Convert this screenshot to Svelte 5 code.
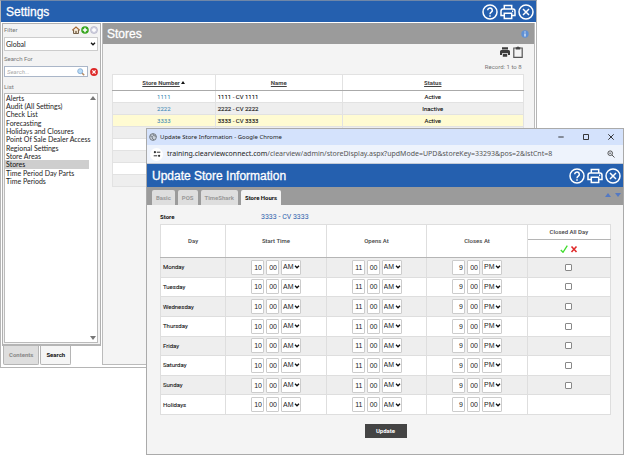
<script>
  let filter = "Global";
  let search = "";
  let selected = "Stores";

  const settings = [
    "Alerts",
    "Audit (All Settings)",
    "Check List",
    "Forecasting",
    "Holidays and Closures",
    "Point Of Sale Dealer Access",
    "Regional Settings",
    "Store Areas",
    "Stores",
    "Time Period Day Parts",
    "Time Periods"
  ];

  const stores = [
    { number: "1111", name: "1111 - CV 1111", status: "Active" },
    { number: "2222", name: "2222 - CV 2222", status: "Inactive" },
    { number: "3333", name: "3333 - CV 3333", status: "Active", current: true },
    {}, {}, {}, {}, {}
  ];

  const tabs = ["Basic", "POS", "TimeShark", "Store Hours"];
  let activeTab = "Store Hours";

  const dayNames = ["Monday", "Tuesday", "Wednesday", "Thursday", "Friday", "Saturday", "Sunday", "Holidays"];

  let days = dayNames.map((name) => ({
    name,
    closed: false,
    times: [
      { label: "Start Time", hour: "10", minute: "00", half: "AM" },
      { label: "Opens At", hour: "11", minute: "00", half: "AM" },
      { label: "Closes At", hour: "9", minute: "00", half: "PM" }
    ]
  }));

  function setAll(closed) {
    days = days.map((day) => ({ ...day, closed }));
  }
</script>

{#snippet chevron()}
  <svg class="chevron" viewBox="0 0 6 4" aria-hidden="true"><path d="M1 .8 3 2.8 5 .8" fill="none" stroke="#111" stroke-width="1.3" /></svg>
{/snippet}

{#snippet windowButtons()}
  <div class="window-buttons">
    <button aria-label="Help">
      <svg viewBox="0 0 16 16"><circle cx="8" cy="8" r="7" /><path d="M5.7 6.3a2.3 2.3 0 1 1 3.6 1.9C8.4 8.8 8 9.2 8 10.2M8 11.3v1.5" /></svg>
    </button>
    <button aria-label="Print">
      <svg viewBox="0 0 16 16"><path d="M4.3 5V1.5h7.4V5M4.3 11.5H1V7.3Q1 5 3 5h10q2 0 2 2.300v4.200h-3.300M4.300 9.300h7.400v5.200H4.300z" /><path d="M12 7.300h1.200" /></svg>
    </button>
    <button aria-label="Close">
      <svg viewBox="0 0 16 16"><circle cx="8" cy="8" r="7" /><path d="m5 5 6 6M11 5l-6 6" /></svg>
    </button>
  </div>
{/snippet}

<main>
  <section class="settings-window">
    <header class="blue-bar">
      <h1>Settings</h1>
      {@render windowButtons()}
    </header>

    <div class="columns">
      <aside>
        <div class="side-panel">
          <div class="label-row">
            <label for="filter">Filter</label>
            <div class="mini-icons">
              <button aria-label="Home">
                <svg viewBox="0 0 8 8"><path d="M1.500 4v3.500h5V4" fill="#eee2cc" stroke="#77634b" /><path d="M.3 4.300 4 1l3.700 3.300" fill="none" stroke="#a56832" stroke-width="1.200" /><path d="M3.300 5h1.400v2.500H3.300z" fill="#7b6650" /></svg>
              </button>
              <button aria-label="Add">
                <svg viewBox="0 0 8 8"><circle cx="4" cy="4" r="3.800" fill="#37a51e" /><path d="M4 1.800v4.400M1.800 4h4.400" stroke="#fff" stroke-width="1.500" /></svg>
              </button>
              <button aria-label="Edit">
                <svg viewBox="0 0 8 8"><circle cx="4" cy="4" r="3.500" fill="#d4d4e2" stroke="#aaaac0" stroke-width=".6" /><path d="M4 2v4M2 4h4" stroke="#fff" stroke-width="1.400" /></svg>
              </button>
            </div>
          </div>
          <div class="filter-select">
            <select id="filter" bind:value={filter}>
              <option>Global</option>
            </select>
            {@render chevron()}
          </div>

          <label class="search-label" for="search">Search For</label>
          <div class="search-row">
            <div class="search-box">
              <input id="search" type="text" placeholder="Search..." bind:value={search}>
              <svg viewBox="0 0 8 8" aria-hidden="true"><path d="m4.700 4.700 2.500 2.500" stroke="#b48a62" stroke-width="1.500" /><circle cx="3.200" cy="3.200" r="2.500" fill="#b9dcf7" stroke="#7fa6cf" stroke-width=".8" /></svg>
            </div>
            <button aria-label="Clear search" on:click={() => (search = "")}>
              <svg viewBox="0 0 8 8"><circle cx="4" cy="4" r="3.900" fill="#dd2929" /><path d="m2.400 2.400 3.200 3.200M5.600 2.400 2.400 5.600" stroke="#fff" stroke-width="1.300" /></svg>
            </button>
          </div>

          <label class="list-label" for="list">List</label>
          <div class="list-box">
            <select id="list" size="11" bind:value={selected}>
              {#each settings as item}
                <option>{item}</option>
              {/each}
            </select>
            <span class="arrow up"></span>
            <span class="arrow down"></span>
          </div>
        </div>
        <div class="side-tabs">
          <button>Contents</button>
          <button class="active">Search</button>
        </div>
      </aside>

      <div class="stores">
        <div class="stores-title">
          <h2>Stores</h2>
          <button aria-label="Info">
            <svg viewBox="0 0 8 8"><circle cx="4" cy="4" r="3.700" fill="#5f90d4" /><path d="M4 1.600v1M4 3.400v3" stroke="#fff" stroke-width="1.100" /></svg>
          </button>
        </div>
        <div class="tools">
          <button aria-label="Print list">
            <svg viewBox="0 0 12 12"><path d="M3 1.300h6v2.200H3zM2.500 4h7Q11 4 11 5.600V9H9V7.300H3V9H1V5.600Q1 4 2.500 4zM3.800 8h4.400v2.700H3.800z" fill="#3d3d3d" /></svg>
          </button>
          <button aria-label="Copy list">
            <svg viewBox="0 0 12 12"><path d="M1.800 2h8.400v9.300H1.800z" fill="none" stroke="#555" stroke-width="1.200" /><path d="M3.700 1.200h1.200a1.200 1.200 0 0 1 2.200 0h1.200v2.400H3.700z" fill="#444" /></svg>
          </button>
        </div>
        <p class="record">Record: 1 to 8</p>
        <table class="store-table">
          <thead>
            <tr>
              <th class="number"><a href="#number">Store Number</a> <span class="sort"></span></th>
              <th class="name"><a href="#name">Name</a></th>
              <th><a href="#status">Status</a></th>
            </tr>
          </thead>
          <tbody>
            {#each stores as store}
              <tr class:current={store.current}>
                <td>{#if store.number}<a href="#{store.number}">{store.number}</a>{/if}</td>
                <td class="name">{store.name ?? ""}</td>
                <td>{store.status ?? ""}</td>
              </tr>
            {/each}
          </tbody>
        </table>
      </div>
    </div>
  </section>

  <section class="popup">
    <div class="chrome-title">
      <svg class="globe" viewBox="0 0 8 8" aria-hidden="true"><circle cx="4" cy="4" r="3.400" fill="#c9d0da" stroke="#6c747e" stroke-width=".9" /><path d="M1 2.800 3.500 3.500 3 5l2 2M4 .8l.5 1.700 2.800.8" fill="none" stroke="#6c747e" stroke-width=".9" /></svg>
      <span>Update Store Information - Google Chrome</span>
      <div class="chrome-buttons">
        <button aria-label="Minimize"><svg viewBox="0 0 8 8"><path d="M1.300 4h5.400" /></svg></button>
        <button aria-label="Maximize"><svg viewBox="0 0 8 8"><path d="M1.500 1.500h5v5h-5z" /></svg></button>
        <button aria-label="Close window"><svg viewBox="0 0 8 8"><path d="m1.300 1.300 5.400 5.400M6.700 1.300 1.300 6.700" /></svg></button>
      </div>
    </div>
    <div class="address">
      <span class="site-info">
        <svg viewBox="0 0 8 8" aria-hidden="true"><path d="M3.800 2.200h3.500M.7 5.800h3.500" stroke="#333" /><circle cx="1.900" cy="2.200" r="1.100" fill="#333" /><circle cx="6.100" cy="5.800" r="1.100" fill="#333" /></svg>
      </span>
      <span class="url">training.clearviewconnect.com<i>/clearview/admin/storeDisplay.aspx?updMode=UPD&amp;storeKey=33293&amp;pos=2&amp;lstCnt=8</i></span>
      <button aria-label="Zoom">
        <svg viewBox="0 0 8 8"><circle cx="3.200" cy="3.200" r="2.300" fill="none" stroke="#444" stroke-width=".9" /><path d="m5 5 2.500 2.500M2.200 3.200h2" stroke="#444" stroke-width=".9" /></svg>
      </button>
    </div>
    <header class="blue-bar">
      <h1>Update Store Information</h1>
      {@render windowButtons()}
    </header>
    <nav>
      {#each tabs as tab}
        <button class:active={tab === activeTab} on:click={() => (activeTab = tab)}>{tab}</button>
      {/each}
      <div class="pager">
        <button aria-label="Previous store"><svg viewBox="0 0 6 4"><path d="M0 4 3 0l3 4z" fill="#5379c4" /></svg></button>
        <button aria-label="Next store"><svg viewBox="0 0 6 4"><path d="M0 0h6L3 4z" fill="#5379c4" /></svg></button>
      </div>
    </nav>

    <div class="hours">
      <div class="store-line">
        <strong>Store</strong>
        <span>3333 - CV 3333</span>
      </div>
      <table class="hours-table">
        <thead>
          <tr>
            <th class="day" rowspan="2">Day</th>
            <th rowspan="2">Start Time</th>
            <th rowspan="2">Opens At</th>
            <th rowspan="2">Closes At</th>
            <th class="closed">Closed All Day</th>
          </tr>
          <tr>
            <th class="toggles">
              <button aria-label="Check all" on:click={() => setAll(true)}>
                <svg viewBox="0 0 8 8"><path d="M.8 5 3 7.300 7.300.7" fill="none" stroke="#3fdc2d" stroke-width="1.300" /></svg>
              </button>
              <button aria-label="Clear all" on:click={() => setAll(false)}>
                <svg viewBox="0 0 8 8"><path d="M1.500 1.500 6.500 7M6.500 1.500 1.500 7" fill="none" stroke="#e02b2b" stroke-width="1.600" /></svg>
              </button>
            </th>
          </tr>
        </thead>
        <tbody>
          {#each days as day}
            <tr>
              <td class="day">{day.name}</td>
              {#each day.times as time}
                <td>
                  <div class="time-group">
                    <input type="text" aria-label="{day.name} {time.label} hour" bind:value={time.hour}>
                    <input type="text" aria-label="{day.name} {time.label} minute" bind:value={time.minute}>
                    <div class="half">
                      <select aria-label="{day.name} {time.label} half" bind:value={time.half}>
                        <option>AM</option>
                        <option>PM</option>
                      </select>
                      {@render chevron()}
                    </div>
                  </div>
                </td>
              {/each}
              <td>
                {#if day.name !== "Holidays"}
                  <input type="checkbox" aria-label="{day.name} closed all day" bind:checked={day.closed}>
                {/if}
              </td>
            </tr>
          {/each}
        </tbody>
      </table>
      <button class="update">Update</button>
    </div>
  </section>
</main>

<style>
  :global(body) {
    background: #fff;
  }

  main {
    position: relative;
    min-height: 100vh;
    font-family: Roboto, "Liberation Sans", sans-serif;
    font-size: 6px;
    line-height: 8px;
    color: #222;
  }

  main, main * {
    box-sizing: border-box;
  }

  h1, h2, p {
    margin: 0;
  }

  button, input, select {
    margin: 0;
    padding: 0;
    font: inherit;
    color: inherit;
    border: none;
    border-radius: 0;
    background: none;
    appearance: none;
  }

  svg {
    display: block;
  }

  table {
    width: 100%;
    border-collapse: collapse;
    table-layout: fixed;
  }

  /* settings window */
  .settings-window {
    width: 86%;
    border: 1px solid #b5b5b5;
    border-top-color: #6f87a8;
    background: #fff;
  }

  .blue-bar {
    display: flex;
    align-items: center;
    justify-content: space-between;
    height: 21px;
    padding: 0 2px 0 5px;
    background: #2560af;
  }

  h1, h2 {
    font-family: "Liberation Sans", Arial, sans-serif;
    font-size: 12px;
    font-weight: 400;
    line-height: 16px;
    color: #fff;
    -webkit-text-stroke: 0.3px #fff;
  }

  .window-buttons {
    display: flex;
    gap: 2px;
  }

  .window-buttons svg {
    width: 16px;
    height: 16px;
    fill: none;
    stroke: #fff;
    stroke-width: 1.5;
  }

  .columns {
    display: flex;
    gap: 1px;
    padding: 1px 1px 2px;
  }

  aside {
    flex: none;
    width: 99px;
  }

  .side-panel {
    padding: 2px 2px 1px 1px;
    border: 1px solid #b0b0b0;
    border-bottom: 2px solid #b5b5b5;
    background: #f3f3f3;
  }

  .side-panel label {
    color: #777;
  }

  .label-row, .mini-icons, .search-row, .search-box {
    display: flex;
    align-items: center;
  }

  .label-row {
    justify-content: space-between;
    height: 8px;
  }

  .mini-icons {
    gap: 1px;
  }

  .mini-icons svg, .search-row svg {
    width: 8px;
    height: 8px;
  }

  .filter-select {
    position: relative;
    margin: 3px 0 4px;
  }

  .filter-select select, .list-box select {
    font-family: Lato, "Liberation Sans", sans-serif;
    font-size: 7px;
  }

  .filter-select select {
    display: block;
    width: 100%;
    height: 14px;
    padding-left: 1px;
    border: 1px solid #ccc;
    background: #fff;
  }

  .chevron {
    position: absolute;
    top: 50%;
    right: 2px;
    width: 6px;
    height: 4px;
    margin-top: -2px;
    pointer-events: none;
  }

  .search-label, .list-label {
    display: block;
  }

  .search-row {
    gap: 2px;
    margin: 3px 0 6px;
  }

  .search-box {
    flex: 1;
    min-width: 0;
    height: 11px;
    padding-right: 2px;
    border: 1px solid #aab6c8;
    background: #fff;
  }

  .search-box svg {
    flex: none;
  }

  .search-box input {
    flex: 1;
    min-width: 0;
    height: 9px;
    padding-left: 2px;
    outline: none;
  }

  .search-box input::placeholder {
    font-style: italic;
    color: #aaa;
  }

  .list-box {
    position: relative;
    margin-top: 2px;
  }

  .list-box select {
    display: block;
    width: 100%;
    height: 250px;
    border: 1px solid #bbb;
    background: #fff;
    overflow: hidden;
  }

  .list-box option {
    min-height: 8px;
    margin-right: 8px;
    padding: 0 0 0 1px;
    line-height: 8px;
  }

  .list-box option:nth-child(3n) {
    padding-bottom: 1px;
  }

  .arrow {
    position: absolute;
    right: 2px;
    border: 3px solid transparent;
  }

  .up {
    top: 3px;
    border-top: none;
    border-bottom: 4px solid #777;
  }

  .down {
    bottom: 3px;
    border-bottom: none;
    border-top: 4px solid #777;
  }

  .side-tabs {
    display: flex;
    gap: 1px;
    padding-left: 1px;
  }

  .side-tabs button {
    height: 19px;
    padding: 0 5px;
    border: 1px solid #b5b5b5;
    border-top: none;
    border-radius: 0 0 2px 2px;
    background: #dedede;
    font-weight: 700;
    color: #888;
  }

  .side-tabs .active {
    background: #f5f5f5;
    color: #111;
  }

  .stores {
    flex: 1;
    min-width: 0;
    border: 1px solid #bbb;
    border-top: none;
    background: #f4f4f4;
  }

  .stores-title {
    display: flex;
    align-items: center;
    justify-content: space-between;
    height: 21px;
    padding: 0 5px 0 4px;
    background: #9b9b9b;
  }

  .stores-title svg {
    width: 8px;
    height: 8px;
  }

  .tools {
    display: flex;
    justify-content: flex-end;
    gap: 1px;
    padding: 2px 10px 0;
  }

  .tools svg {
    width: 12px;
    height: 12px;
  }

  .record {
    padding: 5px 12px 3px;
    text-align: right;
    color: #777;
  }

  .store-table {
    width: auto;
    min-width: calc(100% - 19px);
    margin: 0 10px 0 9px;
    background: #fff;
  }

  .store-table th {
    height: 16px;
    padding: 0;
    border: 1px solid #e2e2e2;
    border-bottom-color: #aaa;
    color: #444;
  }

  .store-table th a {
    color: inherit;
  }

  .store-table .number {
    width: 25%;
  }

  .store-table th.name {
    width: 31%;
  }

  .store-table td {
    height: 12px;
    padding: 0;
    border: 1px solid #e2e2e2;
    text-align: center;
    color: #111;
    -webkit-text-stroke: 0.1px #111;
  }

  .store-table td a {
    color: #2f7fb0;
    text-decoration: none;
    -webkit-text-stroke: 0;
  }

  .store-table td.name {
    padding-left: 2px;
    text-align: left;
  }

  .store-table tbody tr:nth-child(even), .hours-table tbody tr:nth-child(odd) {
    background: #eee;
  }

  .store-table tbody .current {
    background: #fffbd2;
  }

  .sort {
    display: inline-block;
    border: 2px solid transparent;
    border-top: none;
    border-bottom: 3px solid #111;
    vertical-align: middle;
  }

  /* store popup, floats over the settings window */
  .popup {
    position: absolute;
    top: 128px;
    left: 146px;
    right: 0;
    border: 1px solid #aaa;
    background: #f4f4f4;
  }

  .chrome-title, .address {
    display: flex;
    align-items: center;
    font-family: "Noto Sans", "Open Sans", sans-serif;
  }

  .chrome-title {
    gap: 3px;
    height: 16px;
    padding: 0 8px 0 2px;
    background: #d4e2fc;
  }

  .globe {
    width: 8px;
    height: 8px;
  }

  .chrome-buttons {
    display: flex;
    gap: 17px;
    margin-left: auto;
  }

  .chrome-buttons svg {
    width: 8px;
    height: 8px;
    fill: none;
    stroke: #222;
    stroke-width: 0.9;
  }

  .address {
    height: 19px;
    padding: 0 8px 0 3px;
    border-bottom: 1px solid #c5cbd5;
    background: #eef3fc;
    font-size: 7px;
  }

  .site-info {
    display: grid;
    place-items: center;
    width: 13px;
    height: 13px;
    margin-right: 4px;
    border-radius: 50%;
    background: #fff;
  }

  .address svg {
    width: 8px;
    height: 8px;
  }

  .url i {
    font-style: normal;
    color: #555;
  }

  .address button {
    margin-left: auto;
  }

  .popup .blue-bar {
    height: 23px;
  }

  nav {
    display: flex;
    align-items: flex-end;
    gap: 3px;
    height: 18px;
    padding-left: 5px;
    background: #9b9b9b;
  }

  nav > button {
    height: 15px;
    padding: 0 4px;
    border-radius: 2px 2px 0 0;
    background: #dedede;
    font-weight: 700;
    color: #999;
  }

  nav > .active {
    background: #f4f4f4;
    color: #111;
  }

  .pager {
    display: flex;
    gap: 4px;
    margin: 0 2px 8px auto;
  }

  .pager svg {
    width: 6px;
    height: 4px;
  }

  .hours {
    padding: 8px 12px 16px 13px;
  }

  .store-line {
    display: flex;
    align-items: center;
    margin-bottom: 3px;
  }

  .store-line strong {
    width: 101px;
    color: #111;
  }

  .store-line span {
    font-size: 7px;
    color: #2e62ad;
  }

  .hours-table {
    height: 191px;
    background: #fff;
  }

  .hours-table th, .hours-table td {
    padding: 0;
    border: 1px solid #dedede;
    text-align: center;
  }

  .hours-table th {
    font-weight: 500;
    color: #444;
  }

  .hours-table thead tr:last-child th, .hours-table thead th[rowspan] {
    border-bottom-color: #b5b5b5;
  }

  .hours-table th.day {
    width: 14.5%;
  }

  .hours-table .closed {
    width: 18.5%;
    height: 15px;
    border-bottom-color: #b5b5b5;
  }

  .toggles {
    height: 18px;
  }

  .toggles button {
    display: inline-block;
    vertical-align: middle;
  }

  .toggles svg {
    width: 8px;
    height: 8px;
  }

  .hours-table td.day {
    padding-left: 2px;
    text-align: left;
    -webkit-text-stroke: 0.1px #222;
  }

  .time-group {
    display: flex;
    justify-content: center;
    gap: 2px;
    font-family: "Liberation Sans", Arial, sans-serif;
    font-size: 7px;
  }

  .time-group input, .half select {
    display: block;
    height: 15px;
    border: 1px solid #ccc;
    border-radius: 1px;
    background: #fff;
  }

  .time-group input {
    width: 13px;
    padding-right: 1px;
    text-align: right;
  }

  .half {
    position: relative;
  }

  .half select {
    width: 20px;
    padding-left: 1px;
  }

  .half .chevron {
    right: 1px;
  }

  input[type="checkbox"] {
    display: block;
    width: 7px;
    height: 7px;
    margin: 0 auto;
    border: 1px solid #888;
    border-radius: 1px;
    background: #fff;
  }

  input[type="checkbox"]:checked {
    background: #2560af;
  }

  .update {
    display: block;
    width: 42px;
    height: 14px;
    margin: 9px auto 0;
    background: #444;
    color: #fff;
    font-weight: 700;
  }
</style>
